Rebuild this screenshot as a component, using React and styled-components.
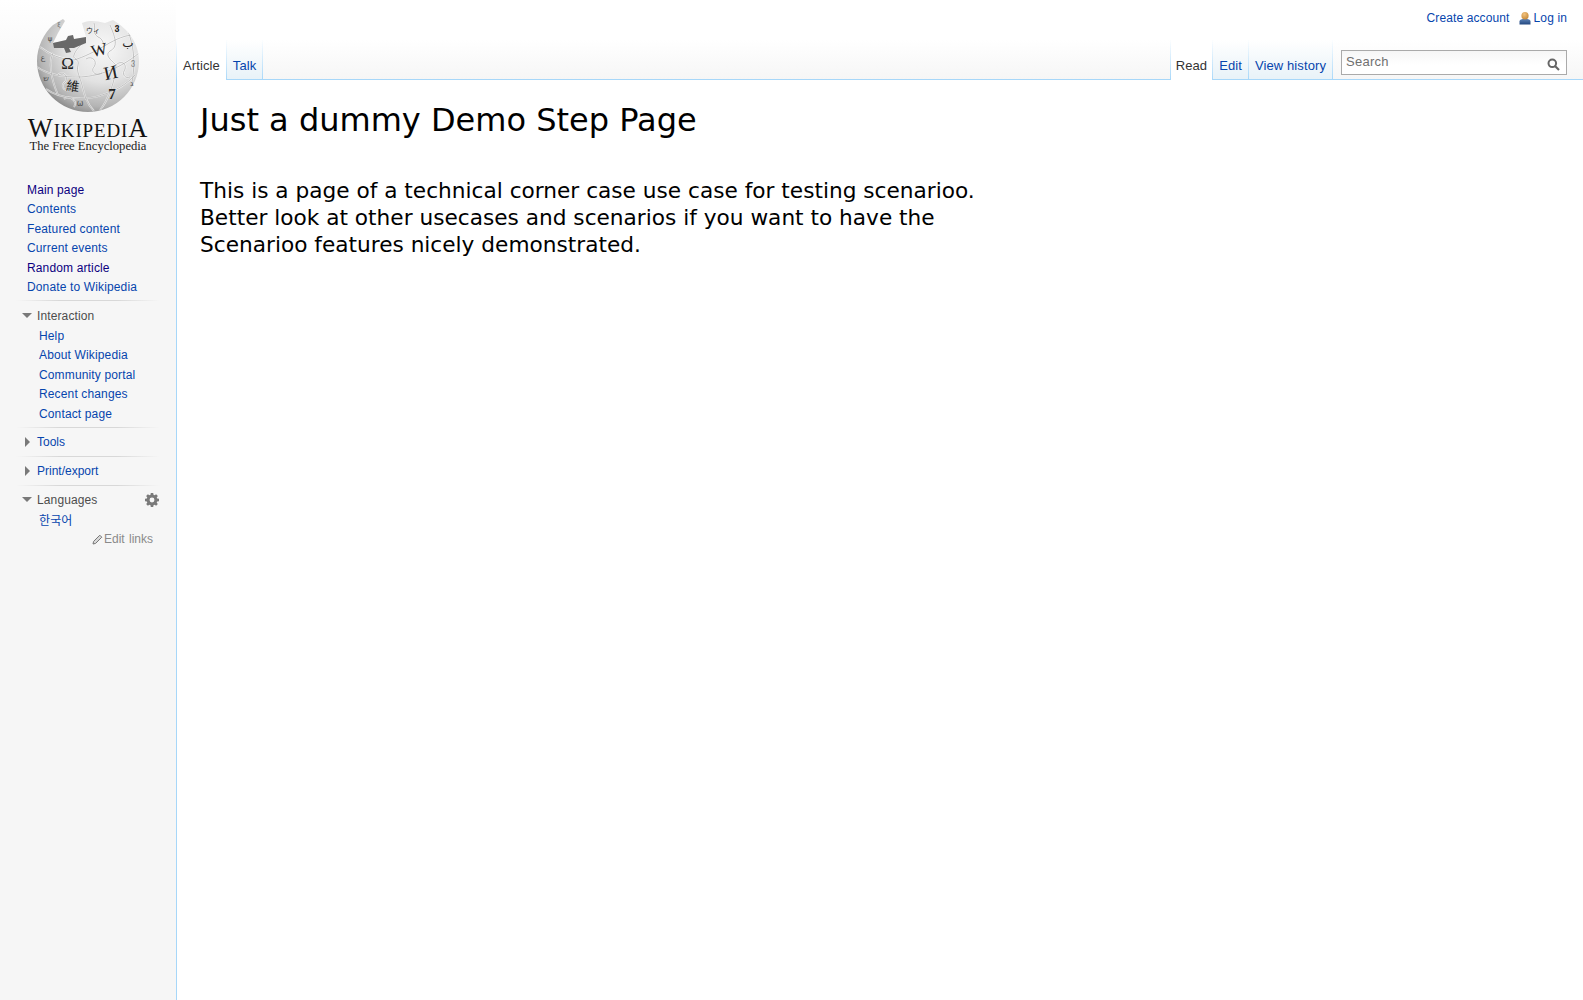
import React from 'react'
import styled, { createGlobalStyle } from 'styled-components'

const GlobalStyle = createGlobalStyle`
  html, body {
    margin: 0;
    padding: 0;
    background: #f6f6f6;
    font-family: "Liberation Sans", Arial, sans-serif;
  }
`

const Page = styled.div`
  display: grid;
  grid-template-columns: 176px 1fr;
  width: 1583px;
  height: 1000px;
  overflow: hidden;
  background: #f6f6f6;
`

const Sidebar = styled.aside`
  display: flex;
  flex-direction: column;
  min-width: 0;
  background: linear-gradient(#fff 0, #f6f6f6 80px);
`

const Logo = styled.div`
  display: flex;
  flex-direction: column;
  align-items: center;
  height: 180.5px;
  padding: 17px 0 0 0;
  box-sizing: border-box;
`

const Wordmark = styled.div`
  margin-top: 10px;
  font-family: "Liberation Serif", serif;
  font-size: 19px;
  line-height: 16px;
  color: #111;
  text-transform: uppercase;
  letter-spacing: 0.85px;
  white-space: nowrap;
`

const WordmarkCap = styled.span`
  font-size: 26.5px;
  line-height: 0;
`

const Tagline = styled.div`
  font-family: "Liberation Serif", serif;
  font-size: 12.6px;
  line-height: 14px;
  color: #222;
`

const NavList = styled.ul`
  list-style: none;
  margin: ${p => p.$gap ? '1.5px 0 0 0' : '0'};
  padding: 0 0 0 ${p => p.$nested ? '39px' : '27px'};
`

const NavItem = styled.li`
  font-size: 12px;
  line-height: 19.5px;
  height: 19.5px;
  white-space: nowrap;
  letter-spacing: 0.14px;
`

const NavLink = styled.a`
  color: ${p => p.$visited ? '#0b0080' : '#0645ad'};
  text-decoration: none;
`

const KoreanLink = styled(NavLink)`
  font-family: "Noto Sans CJK KR", sans-serif;
`

const Rule = styled.div`
  height: 1px;
  margin: ${p => p.$tight ? '2.5px' : '4px'} 16px 0 16px;
  background: linear-gradient(to right, #f6f6f6, #d8d8d8 30%, #d8d8d8 70%, #f6f6f6);
`

const Portal = styled.section`
  display: flex;
  flex-direction: column;
`

const PortalHead = styled.div`
  display: flex;
  align-items: center;
  height: 19px;
  margin-top: 5px;
  padding-left: 22px;
  padding-right: 17px;
  font-size: 12px;
  letter-spacing: ${p => p.$link ? '0' : '0.12px'};
  color: ${p => p.$link ? '#0645ad' : '#4d4d4d'};
`

const Arrow = styled.span`
  display: inline-block;
  flex: none;
  width: 15px;
  height: 10px;
  position: relative;

  &::before {
    content: '';
    position: absolute;
    ${p => p.$open ? `
      left: 0;
      top: 2px;
      border-left: 5px solid transparent;
      border-right: 5px solid transparent;
      border-top: 5px solid #797979;
    ` : `
      left: 3px;
      top: 0;
      border-top: 5px solid transparent;
      border-bottom: 5px solid transparent;
      border-left: 5px solid #797979;
    `}
  }
`

const HeadLabel = styled.span`
  flex: 1;
`

const EditLinks = styled.div`
  display: flex;
  justify-content: flex-end;
  align-items: center;
  gap: 1px;
  height: 20px;
  padding-right: 23px;
  font-size: 12px;
  color: #8a8a8a;
  word-spacing: 1px;
`

const Main = styled.main`
  display: flex;
  flex-direction: column;
  min-width: 0;
`

const Header = styled.header`
  height: 79px;
  flex: none;
  background: linear-gradient(#fff 0, #fff 40px, #f6f6f6 79px);
  display: flex;
  flex-direction: column;
`

const PersonalBar = styled.div`
  display: flex;
  justify-content: flex-end;
  align-items: center;
  gap: 9px;
  height: 18px;
  margin-top: 9px;
  padding-right: 16px;
  font-size: 12px;
  letter-spacing: 0.12px;
  flex: none;
`

const LoginLink = styled.span`
  display: flex;
  align-items: center;
  gap: 3px;
`

const TabsRow = styled.div`
  flex: 1;
  display: flex;
  align-items: flex-end;
  justify-content: space-between;
`

const TabGroup = styled.div`
  display: flex;
  align-items: flex-start;
  height: 39px;
  border-left: 1px solid;
  border-image: linear-gradient(#fff, #a7d7f9) 1;
`

const Tab = styled.a`
  position: relative;
  z-index: 1;
  display: block;
  box-sizing: border-box;
  height: ${p => p.$active ? '40px' : '39px'};
  padding: 18px ${p => p.$narrow ? '5px' : '6px'} 0;
  font-size: 13px;
  line-height: 15px;
  letter-spacing: 0.1px;
  color: ${p => p.$active ? '#333' : '#0645ad'};
  background: ${p => p.$active ? '#fff' : 'linear-gradient(#fff, #e8f2f8)'};
  border-right: 1px solid;
  border-image: linear-gradient(#fff, #a7d7f9) 1;
  text-decoration: none;
`

const RightSide = styled.div`
  display: flex;
  align-items: flex-end;
`

const SearchBox = styled.div`
  position: relative;
  box-sizing: border-box;
  width: 226px;
  height: 25px;
  margin: 0 16px 4px 8px;
  border: 1px solid #aaa;
  background: linear-gradient(#f6f6f6, #fff 60%);
  padding: 2px 4px;
  font-size: 13px;
  line-height: 17px;
  color: #707070;
  letter-spacing: 0.25px;
`

const SearchIcon = styled.svg`
  position: absolute;
  right: 6px;
  top: 7px;
`

const Content = styled.article`
  flex: 1;
  box-sizing: border-box;
  background: #fff;
  border-left: 1px solid #a7d7f9;
  border-top: 1px solid #a7d7f9;
  padding: 20px 22px 0 23px;
  font-family: "DejaVu Sans", sans-serif;
  color: #000;
`

const Title = styled.h1`
  margin: 0;
  font-size: 32px;
  font-weight: 400;
  line-height: 40px;
`

const Body = styled.p`
  margin: 37px 0 0 0;
  width: 800px;
  font-size: 21.67px;
  line-height: 27px;
`

const GearIcon = () => (
  <svg width="14" height="14" viewBox="0 0 16 16">
    <path
      fill="#7a7a7a"
      fillRule="evenodd"
      d="M6.6 0h2.8l.3 2.1 1.3.5 1.7-1.3 2 2-1.3 1.7.5 1.3 2.1.3v2.8l-2.1.3-.5 1.3 1.3 1.7-2 2-1.7-1.3-1.3.5-.3 2.1H6.6l-.3-2.1-1.3-.5-1.7 1.3-2-2 1.3-1.7-.5-1.3L0 9.4V6.6l2.1-.3.5-1.3-1.3-1.7 2-2 1.7 1.3 1.3-.5zM8 5.2a2.8 2.8 0 1 0 0 5.6 2.8 2.8 0 0 0 0-5.6z"
    />
  </svg>
)

const PencilIcon = () => (
  <svg width="11" height="11" viewBox="0 0 11 11">
    <path d="M1 10l.6-2.6L7.8 1.2l2 2L3.6 9.4z" fill="#d8d8d8" stroke="#777" strokeWidth="1" />
  </svg>
)

const UserIcon = () => (
  <svg width="12" height="13" viewBox="0 0 12 13">
    <defs>
      <radialGradient id="head" cx="0.4" cy="0.3" r="0.8">
        <stop offset="0" stopColor="#f2c27e" />
        <stop offset="1" stopColor="#c0822f" />
      </radialGradient>
      <linearGradient id="suit" x1="0" y1="0" x2="0" y2="1">
        <stop offset="0" stopColor="#5f84b8" />
        <stop offset="1" stopColor="#23477f" />
      </linearGradient>
    </defs>
    <path d="M0.5 12.5v-3c0-1.8 2-2.8 5.5-2.8s5.5 1 5.5 2.8v3z" fill="url(#suit)" />
    <ellipse cx="6" cy="3.8" rx="3.6" ry="3.8" fill="url(#head)" />
  </svg>
)

const puzzleLines = [
  'M4 30 C14 38 24 42 38 43 C48 40 60 34 70 28 C80 22 90 18 97 18',
  'M1 50 C12 58 28 60 42 60 C60 60 84 52 103 36',
  'M10 72 C24 82 50 84 66 78 C80 74 92 66 99 58',
  'M49 22 C44 30 40 32 38 38 C36 42 44 42 42 48 C40 54 44 60 46 68 C48 76 50 86 58 94',
  'M74 8 C80 22 82 30 74 34 C68 38 76 44 80 48 C80 62 72 84 64 93',
  'M17 36 C13 44 14 60 22 78',
  'M92 14 C97 28 100 42 96 66',
  'M50 42 C56 38 62 44 58 50 C54 54 60 60 66 56',
  'M22 58 C28 52 34 62 28 66 C24 70 30 76 36 72',
  'M80 48 C86 42 92 48 88 54 C86 58 90 62 94 60',
  'M58 6 C60 12 56 16 62 20 C68 22 66 28 70 28',
  'M28 82 C34 78 42 84 38 90',
]

const Globe = () => (
  <svg width="104" height="96" viewBox="0 0 104 96">
    <defs>
      <radialGradient id="ball" cx="0.64" cy="0.32" r="0.72">
        <stop offset="0" stopColor="#f8f8f8" />
        <stop offset="0.5" stopColor="#e2e2e2" />
        <stop offset="0.85" stopColor="#b4b4b4" />
        <stop offset="1" stopColor="#8a8a8a" />
      </radialGradient>
      <clipPath id="ballShape">
        <path d="M1 44 C1 30 8 16 17 8 L27 2 L29 4 L22 16 L17 26 L50 20 L46 6 L49 5 C54 3 62 4 69 6 L77 3 C92 12 103 26 103 44 A51 51 0 0 1 1 44 Z" />
      </clipPath>
    </defs>
    <g clipPath="url(#ballShape)">
      <rect x="0" y="0" width="104" height="96" fill="url(#ball)" />
      <g fill="none">
        {puzzleLines.map(d => (
          <path key={d} d={d} stroke="#fff" strokeWidth="1.8" opacity="0.7" />
        ))}
        {puzzleLines.map(d => (
          <path key={d} d={d} stroke="#aaa" strokeWidth="0.7" />
        ))}
      </g>
    </g>
    <path
      d="M17 26 L30 23 L32 19 L37 18 L38 22 L50 20 L50 26 L38 31 L33 31 L35 35 L30 36 L28 31 L18 31 Z"
      fill="#696969"
    />
    <g fontFamily="'Liberation Serif', serif" fill="#222" textAnchor="middle">
      <text x="31.5" y="52" fontSize="17">Ω</text>
      <text x="63" y="38.5" fontSize="17" transform="rotate(-13 63 33)">W</text>
      <text x="74.5" y="62" fontSize="19" transform="rotate(-12 74.5 55.5)">И</text>
      <text x="76" y="82" fontSize="15" fontWeight="700">7</text>
      <text x="37" y="74" fontSize="13" fontFamily="'Noto Sans CJK SC', sans-serif" transform="rotate(8 37 69)">維</text>
      <text x="92" y="30" fontSize="12" fontFamily="'DejaVu Sans', sans-serif">ب</text>
      <text x="81" y="13" fontSize="9" fontFamily="'DejaVu Sans', sans-serif" fontWeight="700">ვ</text>
      <text x="57" y="16" fontSize="7" fontFamily="'Noto Sans CJK JP', sans-serif">ウィ</text>
      <text x="23" y="10" fontSize="6" fill="#666" fontFamily="'DejaVu Sans', sans-serif">ξ</text>
      <text x="14" y="24" fontSize="7" fill="#444" fontFamily="'DejaVu Sans', sans-serif">ψ</text>
      <text x="7" y="43" fontSize="8" fill="#555" fontFamily="'DejaVu Sans', sans-serif">ع</text>
      <text x="10" y="64" fontSize="8" fill="#555" fontFamily="'DejaVu Sans', sans-serif">ש</text>
      <text x="97" y="48" fontSize="8" fill="#777" fontFamily="'DejaVu Sans', sans-serif">ვ</text>
      <text x="96" y="69" fontSize="8" fill="#555" fontFamily="'DejaVu Sans', sans-serif">ג</text>
      <text x="44" y="89" fontSize="8" fill="#555" fontFamily="'DejaVu Sans', sans-serif">ω</text>
    </g>
  </svg>
)

const interaction = ['Help', 'About Wikipedia', 'Community portal', 'Recent changes', 'Contact page']
const mainNav = [
  { label: 'Main page', visited: true },
  { label: 'Contents' },
  { label: 'Featured content' },
  { label: 'Current events' },
  { label: 'Random article', visited: true },
  { label: 'Donate to Wikipedia' },
]

export default function App() {
  return (
    <Page>
      <GlobalStyle />
      <Sidebar>
        <Logo>
          <Globe />
          <Wordmark><WordmarkCap>W</WordmarkCap>ikipedi<WordmarkCap>a</WordmarkCap></Wordmark>
          <Tagline>The Free Encyclopedia</Tagline>
        </Logo>
        <NavList>
          {mainNav.map(item => (
            <NavItem key={item.label}>
              <NavLink $visited={item.visited}>{item.label}</NavLink>
            </NavItem>
          ))}
        </NavList>
        <Rule $tight />
        <Portal>
          <PortalHead><Arrow $open /><HeadLabel>Interaction</HeadLabel></PortalHead>
          <NavList $nested $gap>
            {interaction.map(label => (
              <NavItem key={label}><NavLink>{label}</NavLink></NavItem>
            ))}
          </NavList>
        </Portal>
        <Rule $tight />
        <Portal>
          <PortalHead $link><Arrow /><HeadLabel>Tools</HeadLabel></PortalHead>
        </Portal>
        <Rule />
        <Portal>
          <PortalHead $link><Arrow /><HeadLabel>Print/export</HeadLabel></PortalHead>
        </Portal>
        <Rule />
        <Portal>
          <PortalHead><Arrow $open /><HeadLabel>Languages</HeadLabel><GearIcon /></PortalHead>
          <NavList $nested>
            <NavItem><KoreanLink lang="ko">한국어</KoreanLink></NavItem>
          </NavList>
          <EditLinks><PencilIcon />Edit links</EditLinks>
        </Portal>
      </Sidebar>
      <Main>
        <Header>
          <PersonalBar>
            <NavLink>Create account</NavLink>
            <LoginLink><UserIcon /><NavLink>Log in</NavLink></LoginLink>
          </PersonalBar>
          <TabsRow>
            <TabGroup>
              <Tab $active>Article</Tab>
              <Tab>Talk</Tab>
            </TabGroup>
            <RightSide>
              <TabGroup>
                <Tab $active $narrow>Read</Tab>
                <Tab>Edit</Tab>
                <Tab>View history</Tab>
              </TabGroup>
              <SearchBox>
                Search
                <SearchIcon width="13" height="13" viewBox="0 0 13 13">
                  <circle cx="5.3" cy="5.3" r="3.8" fill="none" stroke="#666" strokeWidth="2" />
                  <path d="M8 8l4 4" stroke="#666" strokeWidth="2.2" />
                </SearchIcon>
              </SearchBox>
            </RightSide>
          </TabsRow>
        </Header>
        <Content>
          <Title>Just a dummy Demo Step Page</Title>
          <Body>
            This is a page of a technical corner case use case for testing scenarioo.
            Better look at other usecases and scenarios if you want to have the
            Scenarioo features nicely demonstrated.
          </Body>
        </Content>
      </Main>
    </Page>
  )
}
